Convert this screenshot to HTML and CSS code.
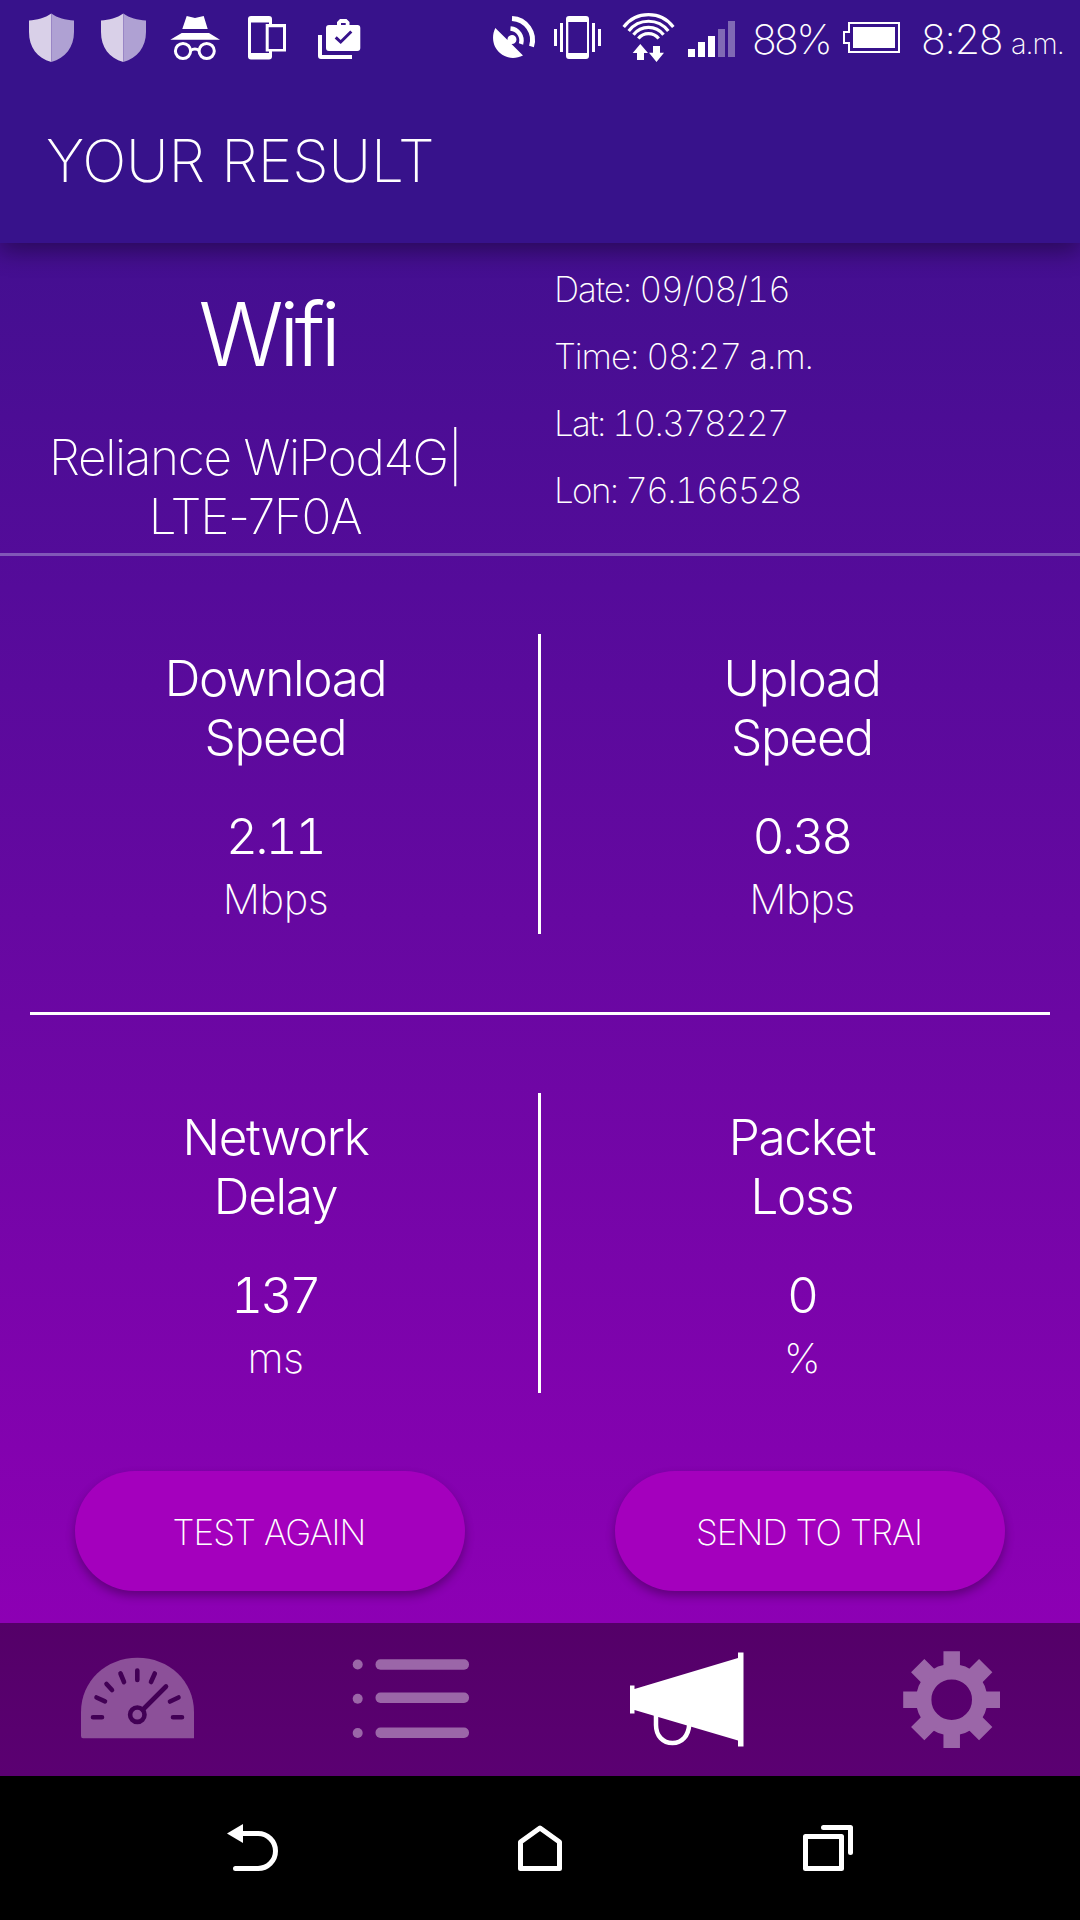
FILE: index.html
```
<!DOCTYPE html>
<html lang="en">
<head>
  <meta charset="UTF-8" />
  <title>Your Result</title>
  <link rel="stylesheet" href="styles.css">
</head>
<body>
  <div class="status-bar">
    <svg width="72" height="72" viewBox="15 0 72 72">
      <path fill="#d9d0e8" d="M51.3 13.5C45 18 37 20 29 20.5V32C29 47 37 58 51.3 62Z"/>
      <path fill="#afa1d3" d="M51.3 13.5C57.5 18 65.500 20 74 20.500V32C74 47 65.500 58 51.300 62Z"/>
    </svg>
    <svg width="72" height="72" viewBox="15 0 72 72">
      <path fill="#d9d0e8" d="M51.3 13.5C45 18 37 20 29 20.5V32C29 47 37 58 51.3 62Z"/>
      <path fill="#afa1d3" d="M51.3 13.5C57.5 18 65.500 20 74 20.500V32C74 47 65.500 58 51.300 62Z"/>
    </svg>
    <svg width="72" height="72" viewBox="159 0 72 72" fill="#fff">
      <path d="M186.700 16L195 18L203.700 16L207.700 29H182.300ZM170.300 39.700L181.700 33H209L220 39.700Z"/>
      <g fill="none" stroke="#fff" stroke-width="3">
        <circle cx="183" cy="51" r="7.600"/>
        <circle cx="206.700" cy="51" r="7.600"/>
        <path d="M190.500 50.500Q195 47.500 199.300 50.500"/>
      </g>
    </svg>
    <svg width="72" height="72" viewBox="231 0 72 72" fill="#fff">
      <path fill-rule="evenodd" d="M251 16H269Q272 16 272 19V24H286V51.500H272V56.500Q272 59.500 269 59.500H251Q248 59.500 248 56.500V19Q248 16 251 16ZM251 22.500V53H269V51.500H265.700V24H269V22.500ZM268.700 27.300V49H283V27.300Z"/>
    </svg>
    <svg width="72" height="72" viewBox="303 0 72 72" fill="#fff">
      <path fill-rule="evenodd" d="M337 25V22L340 19H346.500L349.500 22V25H357.500Q360.300 25 360.300 28V48Q360.300 51 357.300 51H329Q326 51 326 48V28Q326 25 329 25ZM341 25H345.700V23H341Z"/>
      <path d="M318 35H322V55H352V59H321Q318 59 318 56Z"/>
      <path d="M335.700 37.300L340.700 42L351.300 31.500" fill="none" stroke="#37128b" stroke-width="3"/>
    </svg>

    <div class="status-right">
      <svg width="68" height="72" viewBox="480 0 68 72" fill="#fff">
        <path d="M495.300 28L507.500 40A4.500 4.500 0 1 1 511.500 44L523 55.500C515 59.500 506 58.500 500 53C493 47 491 37 495.300 28Z"/>
        <path d="M510.500 28.500A12 12 0 0 1 521 44" fill="none" stroke="#fff" stroke-width="4.500"/>
        <path d="M512 18.500A21.500 21.500 0 0 1 531.500 46.500" fill="none" stroke="#fff" stroke-width="5"/>
      </svg>
      <svg width="64" height="72" viewBox="548 0 64 72" fill="#fff">
        <path fill-rule="evenodd" d="M569 16H586Q589 16 589 19V56Q589 59 586 59H569Q566 59 566 56V19Q566 16 569 16ZM568.300 22V53H587V22Z"/>
        <path d="M554 29h3v17h-3zM560 23h3v29h-3zM592 23h3v29h-3zM598 29h3v17h-3z"/>
      </svg>
      <svg width="70" height="72" viewBox="612 0 70 72" fill="#fff">
        <g fill="none" stroke="#fff" stroke-width="3.200">
          <path d="M623.700 27A31 31 0 0 1 673.300 27"/>
          <path d="M628.700 31A25 25 0 0 1 668.300 31"/>
          <path d="M633.500 34.800A19 19 0 0 1 663.500 34.800"/>
          <path d="M638.300 38.600A13 13 0 0 1 658.700 38.600"/>
        </g>
        <path d="M640.300 44L648 53H644V60H637V53H632.700ZM653 46H660V52.700H664L656.500 62L649 52.700H653Z"/>
      </svg>
      <svg width="59" height="72" viewBox="682 0 59 72" fill="#fff">
        <path d="M688 49h7v8h-7zM698 42h7v15h-7zM708 36h7v21h-7z"/>
        <path fill="#8069b5" d="M718 29h7v28h-7zM728 21h7v36h-7z"/>
      </svg>
      <span class="battery-text">88%</span>
      <svg width="72" height="72" viewBox="836 0 72 72" fill="#fff">
        <path d="M853 27h42v21h-42z"/>
        <path d="M849 23H899V52H849V43H844V32H849Z" fill="none" stroke="#fff" stroke-width="2"/>
      </svg>
      <span class="clock">8:28</span>
      <span class="ampm">a.m.</span>
    </div>
  </div>

  <div class="header">YOUR RESULT</div>

  <div class="content">
    <div class="info">
      <div class="network">
        <div class="type">Wifi</div>
        <div class="ssid">Reliance WiPod4G|<br>LTE-7F0A</div>
      </div>
      <div class="details">
        <div>Date: 09/08/16</div>
        <div>Time: 08:27 a.m.</div>
        <div class="coord">Lat: 10.378227</div>
        <div class="coord">Lon: 76.166528</div>
      </div>
    </div>

    <div class="results">
      <div class="cell">
        <div class="name">Download<br>Speed</div>
        <div class="value">2.11</div>
        <div class="unit">Mbps</div>
      </div>
      <div class="split"></div>
      <div class="cell">
        <div class="name">Upload<br>Speed</div>
        <div class="value">0.38</div>
        <div class="unit">Mbps</div>
      </div>
    </div>
    <div class="line"></div>
    <div class="results">
      <div class="cell">
        <div class="name">Network<br>Delay</div>
        <div class="value">137</div>
        <div class="unit">ms</div>
      </div>
      <div class="split"></div>
      <div class="cell">
        <div class="name">Packet<br>Loss</div>
        <div class="value">0</div>
        <div class="unit">%</div>
      </div>
    </div>

    <div class="buttons">
      <button>TEST AGAIN</button>
      <button>SEND TO TRAI</button>
    </div>
  </div>

  <div class="tabs">
    <!-- speed test -->
    <svg width="270" height="153" viewBox="0 1623 270 153">
      <path fill="#8c5099" d="M81 1712C81 1681 106 1657.700 137.500 1657.700S194 1681 194 1712V1738.300H83Q81 1738.300 81 1736Z"/>
      <g fill="none" stroke="#420055" stroke-width="4.600" stroke-linecap="round">
        <circle cx="137.300" cy="1714.700" r="7.200"/>
        <path d="M143 1709.500L166 1686.500M93 1717.300H102M96.500 1697.500L105 1701.300M106.500 1684L112 1690M120.500 1673.500L124 1682M137.300 1670.500V1680M154.800 1673.500L151 1682M170 1701.500L178.500 1697.500M173 1717.300H182"/>
      </g>
    </svg>
    <!-- history -->
    <svg width="270" height="153" viewBox="270 1623 270 153" fill="#9b66a8">
      <circle cx="357.700" cy="1664.500" r="5"/>
      <circle cx="357.700" cy="1698.700" r="5"/>
      <circle cx="357.700" cy="1733" r="5"/>
      <rect x="375.500" y="1659.300" width="93.500" height="10.400" rx="5"/>
      <rect x="375.500" y="1692.500" width="93.500" height="10.400" rx="5"/>
      <rect x="375.500" y="1727.500" width="93.500" height="10.400" rx="5"/>
    </svg>
    <!-- results -->
    <svg width="270" height="153" viewBox="540 1623 270 153" fill="#fff">
      <path d="M630 1685.500H634.500V1689L738 1658V1652.500H743.500V1746.500H738V1740.500L634.500 1710V1713.500H630Z"/>
      <path d="M656 1714V1725C656 1736 663 1743 672.500 1743S688.500 1736 689.300 1724" fill="none" stroke="#fff" stroke-width="4.500"/>
    </svg>
    <!-- settings -->
    <svg width="270" height="153" viewBox="810 1623 270 153">
      <circle cx="951.700" cy="1699.700" r="28" fill="none" stroke="#9b66a8" stroke-width="15.400"/>
      <path stroke="#9b66a8" stroke-width="16.500" d="M951.700 1651.200V1669M951.700 1730V1748M903.200 1699.700H921M982 1699.700H1000"/>
      <path stroke="#9b66a8" stroke-width="18.800" d="M917.700 1665.700L930 1678M973.400 1721.400L985.700 1733.700M985.700 1665.700L973.400 1678M917.700 1733.700L930 1721.400"/>
    </svg>
  </div>

  <div class="system-bar">
    <svg width="360" height="144" viewBox="0 1776 360 144">
      <path fill="#fff" d="M227 1833.500L243 1824V1843Z"/>
      <path d="M242 1833.500H258A17.500 17.500 0 0 1 258 1868.500H235.500"/>
    </svg>
    <svg width="360" height="144" viewBox="360 1776 360 144">
      <path d="M540 1828L559.500 1842V1868.500H520.500V1842Z"/>
    </svg>
    <svg width="360" height="144" viewBox="720 1776 360 144">
      <path d="M805.500 1836.500H841.500V1868.500H805.500ZM823.500 1827.500H850.500V1852.500"/>
    </svg>
  </div>
</body>
</html>
```
FILE: styles.css
```
* { box-sizing: border-box; }
body {
  margin: 0; width: 1080px; height: 1920px; overflow: hidden;
  font-family: Inter, "Liberation Sans", sans-serif; font-weight: 200; color: #fff;
  background: #37128b;
}
svg { display: block; flex: none; }
.status-bar {
  height: 72px; padding-left: 15px; display: flex; white-space: nowrap;
  background: #37128b; position: relative; z-index: 2;
}
.status-right { display: flex; margin-left: 105px; line-height: 79px; font-size: 41px; }
.battery-text { width: 95px; padding-left: 11px; letter-spacing: -2.7px; }
.clock { width: 95px; padding-left: 13px; letter-spacing: -1.2px; }
.ampm { font-size: 29px; line-height: 87px; padding-left: 8px; letter-spacing: -1px; }
.header {
  height: 171px; padding: 6px 0 0 46px; line-height: 165px;
  font-size: 58.5px; letter-spacing: -0.1px; background: #37128b;
  position: relative; z-index: 1; box-shadow: 0 8px 22px rgba(0,0,0,0.38);
}
.content {
  height: 1380px;
  background: linear-gradient(#430f90, #550b9a 25%, #6b07a3 56%, #8d00b4);
}
.info { height: 313px; display: flex; border-bottom: 3px solid #8157b8; }
.network { width: 554px; padding: 41px 44px 0 0; text-align: center; }
.type { font-size: 88px; line-height: 100px; font-weight: 300; padding-left: 25px; letter-spacing: -4.6px; }
.ssid { margin-top: 44px; font-size: 49.5px; line-height: 59px; letter-spacing: -1.3px; }
.details {
  padding-top: 13px; font-size: 35px; line-height: 67px; letter-spacing: -1.1px;
  font-variant-numeric: tabular-nums;
}
.coord { letter-spacing: -1.65px; }
.results {
  height: 456px; padding: 0 15px; display: grid; grid-template-columns: 523px 3px 1fr;
  text-align: center;
}
.cell { padding: 93px 2px 0 0; }
.split { margin: 78px 0; background: #fff; }
.line { height: 3px; margin: 0 30px; background: #fff; }
.name, .value { font-size: 49.5px; line-height: 59px; font-weight: 300; letter-spacing: -1.3px; }
.value { margin-top: 40px; padding-right: 1px; letter-spacing: -2.9px; font-variant-numeric: tabular-nums; }
.unit { margin-top: 8px; font-size: 41.5px; line-height: 50px; letter-spacing: -0.5px; }
.buttons { display: flex; justify-content: space-between; padding: 0 75px; }
button {
  width: 390px; height: 120px; padding: 2px 2px 0 0; border: none; border-radius: 60px;
  background: #a400bd; color: #fff; font: inherit; font-size: 35px; letter-spacing: -0.9px;
  box-shadow: 0 5px 10px rgba(0,0,0,0.3);
}
.tabs { height: 153px; display: flex; background: linear-gradient(#540068, #5b0072); }
.system-bar { height: 144px; display: flex; background: #000; }
.system-bar svg { fill: none; stroke: #fff; stroke-width: 5; stroke-linejoin: round; stroke-linecap: round; }
.system-bar path[fill] { stroke: none; }
```
